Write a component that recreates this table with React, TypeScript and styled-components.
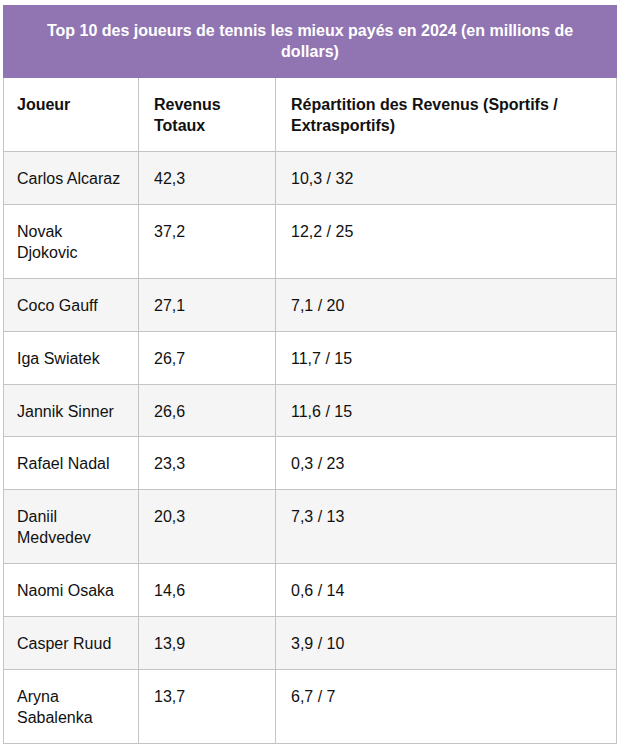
import React from 'react';
import styled, { createGlobalStyle } from 'styled-components';

const GlobalStyle = createGlobalStyle`
    body {
        margin: 0;
        background: #fff;
        font-family: "Liberation Sans", Arial, sans-serif;
        color: #111;
    }
`;

const Wrapper = styled.div`
    width: 614px;
    margin: 5px 0 0 3px;
`;

const Title = styled.div`
    background-color: #9175b3;
    color: #fff;
    font-weight: bold;
    font-size: 16px;
    line-height: 21px;
    text-align: center;
    padding: 15px 28px 16px;
`;

const Table = styled.table`
    width: 100%;
    border-collapse: collapse;
    table-layout: fixed;
    font-size: 16px;
    line-height: 21px;
`;

const Row = styled.tr<{ striped?: boolean }>`
    background-color: ${props => (props.striped ? '#f5f5f5' : '#fff')};
`;

const HeadCell = styled.th`
    text-align: left;
    vertical-align: top;
    font-weight: bold;
    padding: 16px 15px 15px;
    border: 1px solid #c4c4c4;
    border-top: none;

    &:first-child {
        padding-left: 13px;
    }
`;

const Cell = styled.td`
    vertical-align: top;
    padding: 16px 15px 14.9px;
    border: 1px solid #c4c4c4;

    &:first-child {
        padding-left: 13px;
    }
`;

const players = [
    { name: 'Carlos Alcaraz', total: '42,3', split: '10,3 / 32' },
    { name: 'Novak Djokovic', total: '37,2', split: '12,2 / 25' },
    { name: 'Coco Gauff', total: '27,1', split: '7,1 / 20' },
    { name: 'Iga Swiatek', total: '26,7', split: '11,7 / 15' },
    { name: 'Jannik Sinner', total: '26,6', split: '11,6 / 15' },
    { name: 'Rafael Nadal', total: '23,3', split: '0,3 / 23' },
    { name: 'Daniil Medvedev', total: '20,3', split: '7,3 / 13' },
    { name: 'Naomi Osaka', total: '14,6', split: '0,6 / 14' },
    { name: 'Casper Ruud', total: '13,9', split: '3,9 / 10' },
    { name: 'Aryna Sabalenka', total: '13,7', split: '6,7 / 7' },
];

export default function App() {
    return (
        <>
            <GlobalStyle />
            <Wrapper>
                <Title>
                    Top 10 des joueurs de tennis les mieux payés en 2024 (en millions de dollars)
                </Title>
                <Table>
                    <colgroup>
                        <col style={{ width: 135 }} />
                        <col style={{ width: 137 }} />
                        <col />
                    </colgroup>
                    <thead>
                        <Row>
                            <HeadCell>Joueur</HeadCell>
                            <HeadCell>Revenus Totaux</HeadCell>
                            <HeadCell>Répartition des Revenus (Sportifs / Extrasportifs)</HeadCell>
                        </Row>
                    </thead>
                    <tbody>
                        {players.map((p, i) => (
                            <Row key={p.name} striped={i % 2 === 0}>
                                <Cell>{p.name}</Cell>
                                <Cell>{p.total}</Cell>
                                <Cell>{p.split}</Cell>
                            </Row>
                        ))}
                    </tbody>
                </Table>
            </Wrapper>
        </>
    );
}
